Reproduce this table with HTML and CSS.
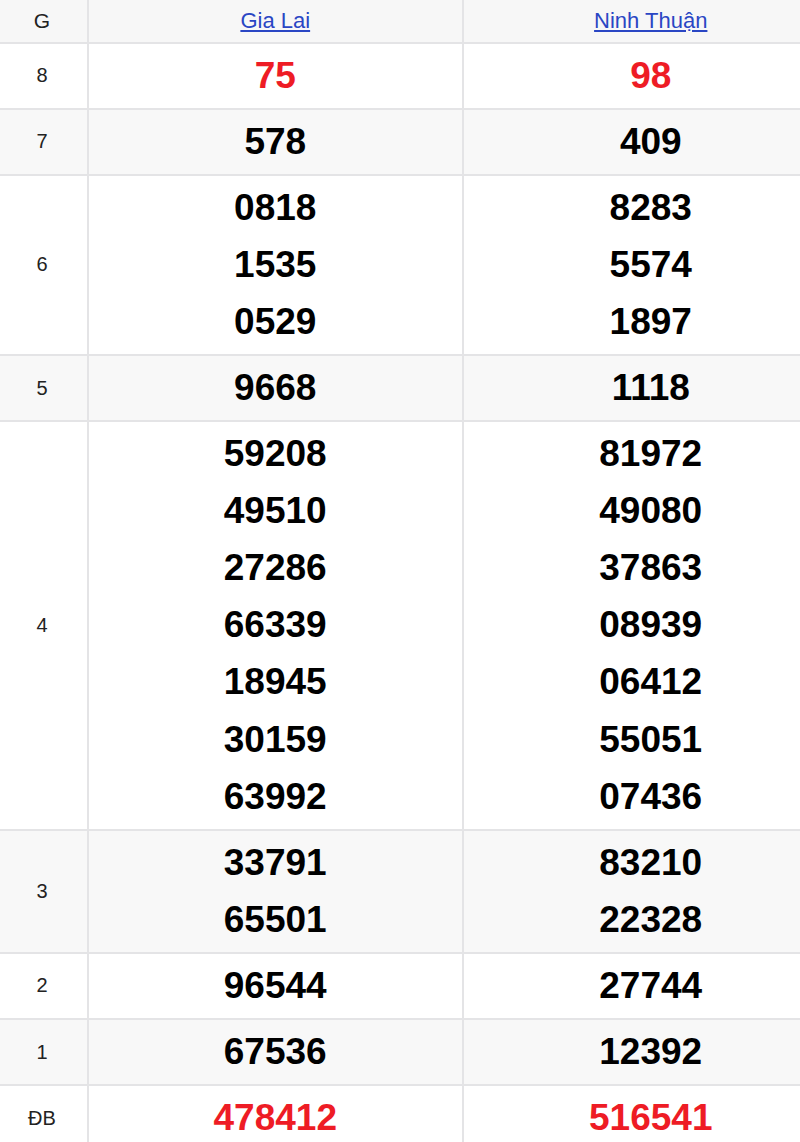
FILE: index.html
```html
<!DOCTYPE html>
<html lang="vi">
<head>
<meta charset="utf-8">
<title>Kết quả xổ số</title>
<link rel="stylesheet" href="styles.css">
</head>
<body>
<table class="kq">
  <thead>
    <tr class="row-head">
      <th class="c-label">G</th>
      <th class="c-prov"><a href="#">Gia Lai</a></th>
      <th class="c-prov"><a href="#">Ninh Thuận</a></th>
    </tr>
  </thead>
  <tbody>
    <tr>
      <td class="c-label">8</td>
      <td class="c-num red"><div>75</div></td>
      <td class="c-num red"><div>98</div></td>
    </tr>
    <tr class="alt">
      <td class="c-label">7</td>
      <td class="c-num"><div>578</div></td>
      <td class="c-num"><div>409</div></td>
    </tr>
    <tr>
      <td class="c-label">6</td>
      <td class="c-num"><div>0818</div><div>1535</div><div>0529</div></td>
      <td class="c-num"><div>8283</div><div>5574</div><div>1897</div></td>
    </tr>
    <tr class="alt">
      <td class="c-label">5</td>
      <td class="c-num"><div>9668</div></td>
      <td class="c-num"><div>1118</div></td>
    </tr>
    <tr>
      <td class="c-label">4</td>
      <td class="c-num"><div>59208</div><div>49510</div><div>27286</div><div>66339</div><div>18945</div><div>30159</div><div>63992</div></td>
      <td class="c-num"><div>81972</div><div>49080</div><div>37863</div><div>08939</div><div>06412</div><div>55051</div><div>07436</div></td>
    </tr>
    <tr class="alt">
      <td class="c-label">3</td>
      <td class="c-num"><div>33791</div><div>65501</div></td>
      <td class="c-num"><div>83210</div><div>22328</div></td>
    </tr>
    <tr>
      <td class="c-label">2</td>
      <td class="c-num"><div>96544</div></td>
      <td class="c-num"><div>27744</div></td>
    </tr>
    <tr class="alt">
      <td class="c-label">1</td>
      <td class="c-num"><div>67536</div></td>
      <td class="c-num"><div>12392</div></td>
    </tr>
    <tr>
      <td class="c-label">ĐB</td>
      <td class="c-num red"><div>478412</div></td>
      <td class="c-num red"><div>516541</div></td>
    </tr>
  </tbody>
</table>
</body>
</html>
```

FILE: styles.css
```css
html, body {
  margin: 0;
  padding: 0;
  background: #ffffff;
  overflow: hidden;
}

body {
  font-family: "Liberation Sans", Arial, sans-serif;
  color: #222;
}

.kq {
  border-collapse: separate;
  border-spacing: 0;
  width: 838px;
  table-layout: fixed;
}

.kq th,
.kq td {
  padding: 0;
  text-align: center;
  vertical-align: middle;
  border-bottom: 2px solid #e4e4e6;
}

.kq th:not(:last-child),
.kq td:not(:last-child) {
  border-right: 2px solid #e4e4e6;
}

.c-label {
  width: 84px;
  padding-right: 3px !important;
}

.row-head th {
  background: #f7f7f7;
  height: 41.5px;
  font-weight: normal;
  font-size: 21px;
  color: #222;
}

.row-head a {
  color: #2a46c4;
  text-decoration: underline;
  font-size: 22px;
}

.kq td.c-label {
  font-size: 20px;
  color: #222;
}

.kq td.c-num {
  padding: 3px 0 4px;
  font-size: 37px;
  font-weight: bold;
  line-height: 57.1px;
  color: #000;
}

.kq td.c-num.red {
  color: #ee1c25;
}

.alt td {
  background: #f8f8f8;
}
```
